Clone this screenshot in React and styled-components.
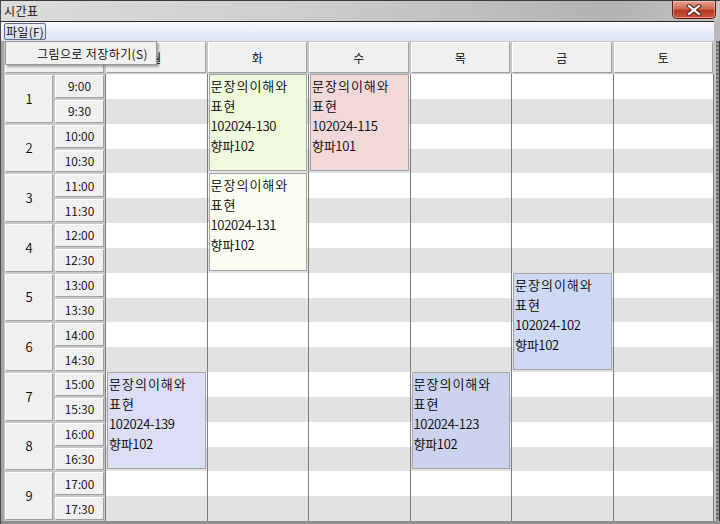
import React from 'react'
import styled, { createGlobalStyle } from 'styled-components'

const GlobalStyle = createGlobalStyle`
    html, body {
        margin: 0;
        padding: 0;
        overflow: hidden;
        background: #b4b4b4;
    }
    * {
        box-sizing: border-box;
    }
`

const FONT = `"Noto Sans CJK KR", "Noto Sans", "Liberation Sans", sans-serif`

const Window = styled.div`
    position: relative;
    width: 720px;
    height: 524px;
    display: flex;
    flex-direction: column;
    font-family: ${FONT};
    font-size: 12px;
    font-weight: 350;
    color: #000;
    background: #b9b9b9;
    border-left: 1px solid #4a4a4a;
`

const TitleBar = styled.div`
    height: 21px;
    display: flex;
    align-items: flex-start;
    justify-content: space-between;
    border-top: 1px solid #3c3c3c;
    background: linear-gradient(90deg, #dcdcdc 0%, #cfcfcf 40%, #b2b2b2 85%, #c4c4c4 100%);
`

const Title = styled.span`
    padding: 2px 0 0 3px;
    line-height: 16px;
    font-size: 12px;
    letter-spacing: 0.5px;
`

const CloseButton = styled.div`
    width: 44px;
    height: 18px;
    margin-right: 4px;
    display: flex;
    align-items: center;
    justify-content: center;
    border: 1px solid #5b1d12;
    border-top: none;
    border-radius: 0 0 5px 5px;
    background: linear-gradient(180deg, #e7a394 0%, #d26a55 45%, #b83a22 55%, #c9563c 100%);
    box-shadow: inset 0 0 0 1px rgba(255, 220, 210, 0.45);
`

const MenuBar = styled.div`
    height: 20px;
    margin-right: 6px;
    display: flex;
    align-items: center;
    padding-left: 3px;
    border-top: 1px solid #2a2a2a;
    background: linear-gradient(180deg, #f7f9fd 0%, #e9eef8 50%, #dce4f2 100%);
`

const MenuItem = styled.div`
    height: 17px;
    padding: 0 1px;
    display: flex;
    align-items: center;
    line-height: 15px;
    border: 1px solid #5f6e8c;
    border-radius: 2px;
    background: linear-gradient(180deg, #e9eef7, #d6deee);
    letter-spacing: 0.3px;
`

const Popup = styled.div`
    position: absolute;
    left: 4px;
    top: 41px;
    width: 152px;
    height: 24px;
    padding-left: 31px;
    display: flex;
    align-items: center;
    background: #f0f0f0;
    border: 1px solid #979797;
    box-shadow: 2px 2px 2px rgba(0, 0, 0, 0.3);
    z-index: 5;
    letter-spacing: 0.4px;
`

const Body = styled.div`
    flex: 1;
    display: flex;
    border-bottom: 3px solid #8e8e8e;
`

const LeftFrame = styled.div`
    width: 3px;
    background: #a4a4a4;
`

const RightFrame = styled.div`
    width: 6px;
    background: repeating-linear-gradient(180deg, #6e6e6e 0px, #6e6e6e 2px, #9a9a9a 2px, #9a9a9a 4px);
    border-left: 2px solid #c6c6c6;
    border-right: 1px solid #3a3a3a;
`

const Grid = styled.div`
    flex: 1;
    display: grid;
    grid-template-columns: 50px 51px repeat(6, 1fr);
    grid-template-rows: 33px repeat(18, 1fr);
    background: #c8c8c8;
`

const Raised = styled.div`
    display: flex;
    align-items: center;
    justify-content: center;
    background: #f0f0f0;
    border-top: 1px solid #ffffff;
    border-left: 1px solid #ffffff;
    border-bottom: 1px solid #a0a0a0;
    border-right: 1px solid #a0a0a0;
    margin: 1px;
    line-height: 14px;
`

const Corner = styled(Raised)`
    grid-column: 1 / 3;
    grid-row: 1;
`

const DayHeader = styled(Raised)`
    grid-column: ${p => p.$col};
    grid-row: 1;
`

const PeriodCell = styled(Raised)`
    grid-column: 1;
    grid-row: ${p => p.$row} / span 2;
    font-size: 13px;
`

const TimeCell = styled(Raised)`
    grid-column: 2;
    grid-row: ${p => p.$row};
`

const Stripe = styled.div`
    grid-column: 3 / 9;
    grid-row: ${p => p.$row};
    background: ${p => (p.$odd ? '#e2e2e2' : '#ffffff')};
`

const DayColumn = styled.div`
    grid-column: ${p => p.$col};
    grid-row: 2 / 20;
    border-left: 1px solid #7c7c7c;
    border-right: ${p => (p.$last ? '1px solid #7c7c7c' : 'none')};
`

const Block = styled.div`
    grid-column: ${p => p.$col};
    grid-row: ${p => p.$row} / span 4;
    margin: 0 1px 2px 2px;
    padding: 1px 0 0 1px;
    background: ${p => p.$bg};
    border: 1px solid #a4a4a4;
    font-size: 13px;
    line-height: 20px;
    z-index: 1;
`

const Line = styled.div`
    white-space: nowrap;
    letter-spacing: ${p => (p.$hangul ? '1px' : '-0.3px')};
`

const days = ['월', '화', '수', '목', '금', '토']

const times = []
for (let h = 9; h <= 17; h++) {
    times.push(`${h}:00`)
    times.push(`${h}:30`)
}

const courses = [
    { day: 1, start: 0, bg: '#eef9de', code: '102024-130', room: '향파102' },
    { day: 1, start: 4, bg: '#fbfdf0', code: '102024-131', room: '향파102' },
    { day: 2, start: 0, bg: '#f2d9d9', code: '102024-115', room: '향파101' },
    { day: 4, start: 8, bg: '#cdd9f5', code: '102024-102', room: '향파102' },
    { day: 0, start: 12, bg: '#dcdef5', code: '102024-139', room: '향파102' },
    { day: 3, start: 12, bg: '#ccd3ee', code: '102024-123', room: '향파102' },
]

const CloseIcon = () => (
    <svg width="16" height="12" viewBox="0 0 16 12">
        <path d="M3 2 L13 10 M13 2 L3 10" stroke="#5a1f14" strokeWidth="4.2" strokeLinecap="square" />
        <path d="M3 2 L13 10 M13 2 L3 10" stroke="#ffffff" strokeWidth="2.2" strokeLinecap="square" />
    </svg>
)

const App = () => {
    return (
        <>
            <GlobalStyle />
            <Window>
                <TitleBar>
                    <Title>시간표</Title>
                    <CloseButton><CloseIcon /></CloseButton>
                </TitleBar>
                <MenuBar>
                    <MenuItem>파일(F)</MenuItem>
                </MenuBar>
                <Popup>그림으로 저장하기(S)</Popup>
                <Body>
                    <LeftFrame />
                    <Grid>
                        <Corner />
                        {days.map((d, i) => (
                            <DayHeader key={d} $col={i + 3}>{d}</DayHeader>
                        ))}
                        {times.map((t, i) =>
                            i % 2 === 0 ? (
                                <PeriodCell key={'p' + i} $row={i + 2}>{i / 2 + 1}</PeriodCell>
                            ) : null
                        )}
                        {times.map((t, i) => (
                            <TimeCell key={t} $row={i + 2}>{t}</TimeCell>
                        ))}
                        {times.map((t, i) => (
                            <Stripe key={'s' + t} $row={i + 2} $odd={i % 2 === 1} />
                        ))}
                        {days.map((d, i) => (
                            <DayColumn key={'c' + d} $col={i + 3} $last={i === days.length - 1} />
                        ))}
                        {courses.map((c, i) => (
                            <Block key={i} $col={c.day + 3} $row={c.start + 2} $bg={c.bg}>
                                <Line $hangul>문장의이해와</Line>
                                <Line $hangul>표현</Line>
                                <Line>{c.code}</Line>
                                <Line>{c.room}</Line>
                            </Block>
                        ))}
                    </Grid>
                    <RightFrame />
                </Body>
            </Window>
        </>
    )
}

export default App
